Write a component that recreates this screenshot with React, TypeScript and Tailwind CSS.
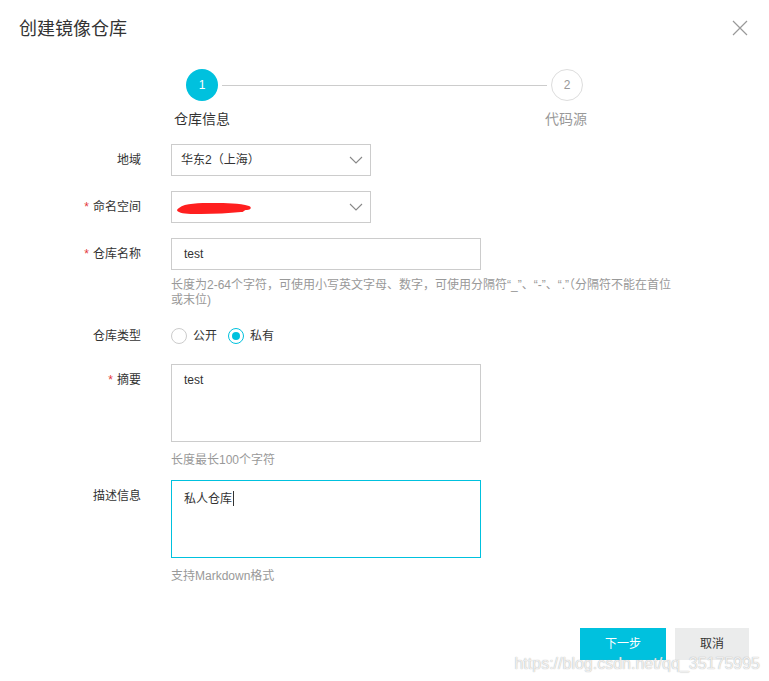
import React from 'react';

const font = { fontFamily: '"Liberation Sans", "Noto Sans CJK SC", sans-serif' };

function Label({ text, required }: { text: string; required?: boolean }) {
  return (
    <div className="w-[142px] shrink-0 pr-[1px] text-right text-[12px] leading-[32px] text-[#333]">
      {required && <span className="mr-[4px] text-[#e4393c]">*</span>}
      {text}
    </div>
  );
}

function Chevron() {
  return (
    <svg width="14" height="8" viewBox="0 0 14 8" className="text-[#888]">
      <path d="M1 1l6 6 6-6" fill="none" stroke="currentColor" strokeWidth="1.1" />
    </svg>
  );
}

function Select({ children }: { children: React.ReactNode }) {
  return (
    <div className="flex h-[32px] w-[200px] items-center justify-between border border-[#cccccc] pl-[9px] pr-[7px] text-[12px] text-[#333]">
      <div className="flex items-center">{children}</div>
      <Chevron />
    </div>
  );
}

function Help({ children }: { children: React.ReactNode }) {
  return <div className="ml-[171px] text-[12px] leading-[15px] text-[#999]">{children}</div>;
}

export default function App() {
  return (
    <div className="relative h-[681px] w-[769px] overflow-hidden bg-white" style={font}>
      {/* Header */}
      <div className="flex items-start justify-between pl-[19px] pr-[21px] pt-[17px]">
        <div className="text-[18px] leading-[24px] text-[#333]">创建镜像仓库</div>
        <svg width="16" height="16" viewBox="0 0 16 16" className="mt-[3px] text-[#999]">
          <path d="M1 1l14 14M15 1L1 15" stroke="currentColor" strokeWidth="1.2" />
        </svg>
      </div>

      {/* Steps */}
      <div className="mt-[28px] flex items-center pl-[186px]">
        <div className="flex h-[32px] w-[32px] items-center justify-center rounded-full bg-[#00c1de] text-[12px] text-white">
          1
        </div>
        <div className="mx-[4px] h-px w-[325px] bg-[#cccccc]" />
        <div className="flex h-[32px] w-[32px] items-center justify-center rounded-full border border-[#dddddd] text-[12px] text-[#999]">
          2
        </div>
      </div>
      <div className="mt-[8px] flex text-[14px] leading-[20px]">
        <div className="ml-[174px] w-[56px] text-[#333]">仓库信息</div>
        <div className="ml-[315px] text-[#999]">代码源</div>
      </div>

      {/* Form */}
      <div className="mt-[15px] flex flex-col">
        <div className="flex gap-[29px]">
          <Label text="地域" />
          <Select>华东2（上海）</Select>
        </div>
        <div className="mt-[15px] flex gap-[29px]">
          <Label text="命名空间" required />
          <Select>
            <svg width="80" height="18" viewBox="0 0 80 18" className="-ml-[6px]">
              <path
                d="M4 10c6-5 20-5 34-5 14 0 26 0 36 3 3 1 2 4-2 4-4 0-2 2-6 2-12 1-26 2-40 2-10 0-18 0-22-2-3-1-2-3 0-4z"
                fill="#ff1f1f"
              />
            </svg>
          </Select>
        </div>
        <div className="mt-[15px] flex gap-[29px]">
          <Label text="仓库名称" required />
          <div className="flex h-[32px] w-[310px] items-center border border-[#cccccc] px-[12px] text-[12px] text-[#333]">
            test
          </div>
        </div>
        <div className="mt-[8px]">
          <Help>
            <div className="w-[508px]">
              长度为2-64个字符，可使用小写英文字母、数字，可使用分隔符“_”、“-”、“.”（分隔符不能在首位或末位)
            </div>
          </Help>
        </div>

        <div className="mt-[12px] flex items-center gap-[29px]">
          <Label text="仓库类型" />
          <div className="flex items-center text-[12px] text-[#333]">
            <span className="h-[16px] w-[16px] rounded-full border border-[#cccccc]" />
            <span className="ml-[6px]">公开</span>
            <span className="ml-[11px] flex h-[16px] w-[16px] items-center justify-center rounded-full border border-[#00c1de]">
              <span className="h-[8px] w-[8px] rounded-full bg-[#00c1de]" />
            </span>
            <span className="ml-[6px]">私有</span>
          </div>
        </div>

        <div className="mt-[12px] flex gap-[29px]">
          <Label text="摘要" required />
          <div className="h-[78px] w-[310px] border border-[#cccccc] px-[12px] pt-[7px] text-[12px] leading-[16px] text-[#333]">
            test
          </div>
        </div>
        <div className="mt-[11px]">
          <Help>长度最长100个字符</Help>
        </div>

        <div className="mt-[12px] flex gap-[29px]">
          <Label text="描述信息" />
          <div className="h-[78px] w-[310px] border border-[#00c1de] px-[12px] pt-[7px] text-[12px] leading-[16px] text-[#333]">
            私人仓库<span className="ml-[1px] inline-block h-[15px] w-px translate-y-[3px] bg-[#333]" />
          </div>
        </div>
        <div className="mt-[11px]">
          <Help>支持Markdown格式</Help>
        </div>
      </div>

      {/* Footer */}
      <div className="mt-[44px] flex justify-end gap-[9px] pr-[20px]">
        <button className="h-[32px] w-[86px] bg-[#00c1de] text-[12px] text-white">下一步</button>
        <button className="h-[32px] w-[74px] bg-[#ebecec] text-[12px] text-[#333]">取消</button>
      </div>

      <div className="absolute bottom-[8px] right-[9px] text-[16px] leading-[18px] text-white/80 [text-shadow:0_0_1px_#999]">
        https://blog.csdn.net/qq_35175995
      </div>
    </div>
  );
}
